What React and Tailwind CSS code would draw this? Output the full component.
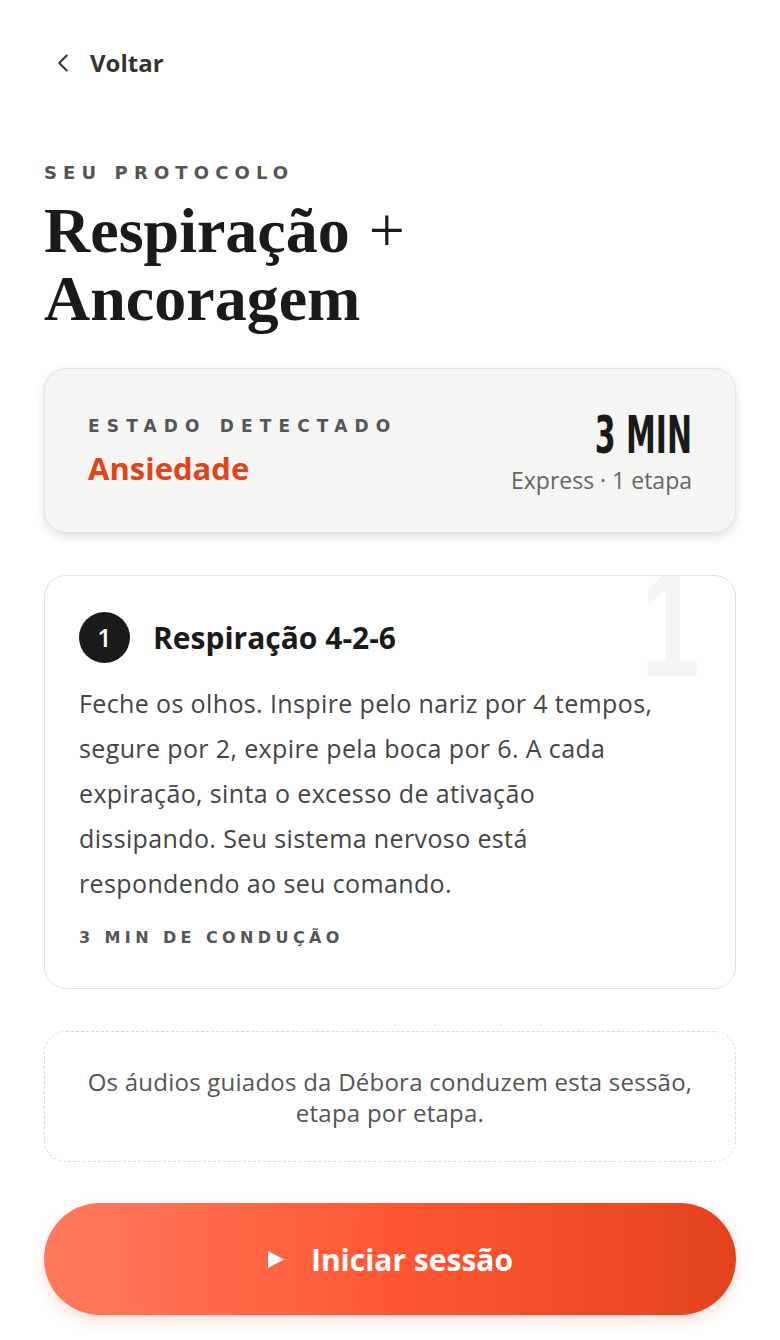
import { ChevronLeft } from 'lucide-react';

const sans = 'font-["Open_Sans","Noto_Sans",sans-serif]';
const label = 'font-["DejaVu_Sans","Open_Sans",sans-serif] font-bold text-[#555] leading-none';
const condensed = 'font-["DejaVu_Sans_Condensed","Liberation_Sans_Narrow",sans-serif]';

const App = () => {
  return (
    <div className={`min-h-screen bg-white px-[44px] pt-[48px] pb-[26px] ${sans}`}>
      <button className="flex items-center gap-[12px] text-[#333] ml-[4px]">
        <ChevronLeft size={30} strokeWidth={1.6} />
        <span className="text-[24px] font-bold leading-none">Voltar</span>
      </button>

      <div className="mt-[86px]">
        <p className={`${label} text-[18px] tracking-[0.34em]`}>SEU PROTOCOLO</p>
        <h1 className='mt-[15px] font-["Liberation_Serif",serif] font-bold text-[64px] leading-[68px] text-[#1a1a1a]'>
          Respiração <span className="ml-[3px] font-normal">+</span>
          <br />
          Ancoragem
        </h1>
      </div>

      <div className="mt-[35px] flex items-center justify-between rounded-[22px] border border-[#e2e2e0] bg-[#f5f5f3] px-[43px] h-[165px] shadow-[0_4px_10px_rgba(0,0,0,0.12)]">
        <div>
          <p className={`${label} text-[17px] tracking-[0.42em]`}>ESTADO DETECTADO</p>
          <p className="mt-[18px] text-[31px] font-bold text-[#e1431d] leading-none">Ansiedade</p>
        </div>
        <div className="text-right">
          <p className={`${condensed} font-bold text-[52px] leading-none text-[#1a1a1a] scale-x-[0.64] origin-right`}>3 MIN</p>
          <p className="mt-[8px] text-[23px] text-[#666] leading-none">Express · 1 etapa</p>
        </div>
      </div>

      <div className="relative mt-[42px] overflow-hidden rounded-[22px] border-[1.5px] border-[#e2e2e2] bg-white px-[34px] pt-[36px] pb-[42px]">
        <span className='pointer-events-none absolute right-[36px] -top-[27px] font-["Liberation_Sans",sans-serif] font-bold text-[150px] leading-none text-[#f5f5f5] scale-x-[0.7] origin-right'>1</span>
        <div className="relative flex items-center gap-[23px]">
          <div className="flex h-[51px] w-[51px] items-center justify-center rounded-full bg-[#1a1a1a] text-[25px] font-semibold text-white">1</div>
          <h2 className="text-[30px] font-bold text-[#1a1a1a] leading-none">Respiração 4-2-6</h2>
        </div>
        <p className="relative mt-[18px] text-[25px] tracking-[0.015em] leading-[45px] text-[#444]">
          Feche os olhos. Inspire pelo nariz por 4 tempos,
          <br />
          segure por 2, expire pela boca por 6. A cada
          <br />
          expiração, sinta o excesso de ativação
          <br />
          dissipando. Seu sistema nervoso está
          <br />
          respondendo ao seu comando.
        </p>
        <p className={`${label} relative mt-[24px] text-[16px] tracking-[0.275em]`}>3 MIN DE CONDUÇÃO</p>
      </div>

      <div className="mt-[42px] flex h-[131px] items-center justify-center rounded-[22px] border-[1.5px] border-dashed border-[#dcdcdc] px-[20px] text-center">
        <p className="text-[24px] tracking-[0.01em] leading-[31px] text-[#555]">
          Os áudios guiados da Débora conduzem esta sessão,
          <br />
          etapa por etapa.
        </p>
      </div>

      <button className="mt-[41px] flex h-[112px] w-full items-center justify-center gap-[26px] rounded-full bg-gradient-to-r from-[#ff7a5e] via-[#ff5733] to-[#e4421f] shadow-[0_6px_14px_rgba(230,70,30,0.18)]">
        <svg width="18" height="19" viewBox="0 0 18 19"><path d="M1 1 L17 9.5 L1 18 Z" fill="white" /></svg>
        <span className="text-[30px] font-bold text-white">Iniciar sessão</span>
      </button>
    </div>
  );
};

export default App;
